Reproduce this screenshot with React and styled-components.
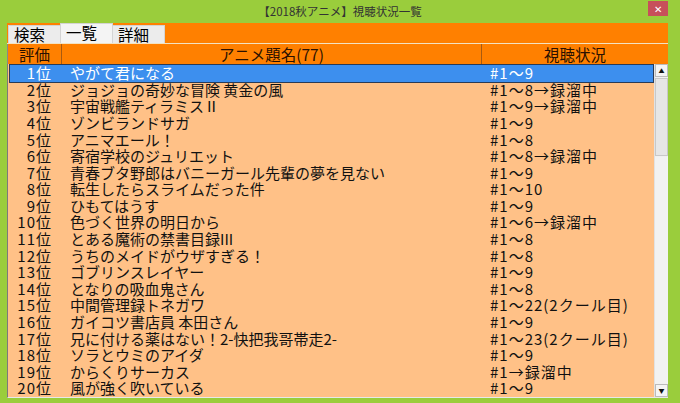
import React from 'react'
import styled, { createGlobalStyle } from 'styled-components'

const GlobalStyle = createGlobalStyle`
  html, body {
    margin: 0;
    padding: 0;
    background: #9acd3c;
  }
`

const rows = [
  ['1位', 'やがて君になる', '#1～9'],
  ['2位', 'ジョジョの奇妙な冒険 黄金の風', '#1～8→録溜中'],
  ['3位', '宇宙戦艦ティラミスⅡ', '#1～9→録溜中'],
  ['4位', 'ゾンビランドサガ', '#1～9'],
  ['5位', 'アニマエール！', '#1～8'],
  ['6位', '寄宿学校のジュリエット', '#1～8→録溜中'],
  ['7位', '青春ブタ野郎はバニーガール先輩の夢を見ない', '#1～9'],
  ['8位', '転生したらスライムだった件', '#1～10'],
  ['9位', 'ひもてはうす', '#1～9'],
  ['10位', '色づく世界の明日から', '#1～6→録溜中'],
  ['11位', 'とある魔術の禁書目録III', '#1～8'],
  ['12位', 'うちのメイドがウザすぎる！', '#1～8'],
  ['13位', 'ゴブリンスレイヤー', '#1～9'],
  ['14位', 'となりの吸血鬼さん', '#1～8'],
  ['15位', '中間管理録トネガワ', '#1～22(2クール目)'],
  ['16位', 'ガイコツ書店員 本田さん', '#1～9'],
  ['17位', '兄に付ける薬はない！2-快把我哥帯走2-', '#1～23(2クール目)'],
  ['18位', 'ソラとウミのアイダ', '#1～9'],
  ['19位', 'からくりサーカス', '#1→録溜中'],
  ['20位', '風が強く吹いている', '#1～9'],
]

const App = () => {
  return (
    <Window>
      <GlobalStyle />
      <TitleBar>
        <span>【2018秋アニメ】視聴状況一覧</span>
        <CloseButton>✕</CloseButton>
      </TitleBar>
      <Client>
        <TabStrip>
          <Tab>検索</Tab>
          <Tab active>一覧</Tab>
          <Tab>詳細</Tab>
        </TabStrip>
        <Separator />
        <Header>
          <HeaderCell>評価</HeaderCell>
          <HeaderCell>アニメ題名(77)</HeaderCell>
          <HeaderCell last>視聴状況</HeaderCell>
        </Header>
        <ListArea>
          <Rows>
            {rows.map(([rank, title, status], i) => (
              <Row key={rank} selected={i === 0}>
                <Rank>{rank}</Rank>
                <Title>{title}</Title>
                <Status>{status}</Status>
              </Row>
            ))}
          </Rows>
          <ScrollBar>
            <ScrollButton>▲</ScrollButton>
            <Thumb />
            <Track />
            <ScrollButton>▼</ScrollButton>
          </ScrollBar>
        </ListArea>
      </Client>
    </Window>
  )
}

const Window = styled.div`
  width: 680px;
  height: 403px;
  background: #9acd3c;
  display: flex;
  flex-direction: column;
  font-family: "Noto Sans CJK JP", "Noto Sans", sans-serif;
  overflow: hidden;
`

const TitleBar = styled.div`
  height: 24px;
  position: relative;
  display: flex;
  align-items: center;
  justify-content: center;
  font-size: 11.5px;
  color: #333;
  span {
    margin-top: -1px;
  }
`

const CloseButton = styled.div`
  position: absolute;
  right: 12px;
  top: 1px;
  width: 20px;
  height: 15px;
  background: #c7505a;
  color: #fff;
  font-size: 10px;
  display: flex;
  align-items: center;
  justify-content: center;
`

const Client = styled.div`
  margin: 0 12px 5px 7px;
  flex: 1;
  display: flex;
  flex-direction: column;
`

const TabStrip = styled.div`
  height: 20px;
  background: #ff8000;
  display: flex;
  align-items: flex-end;
  padding-left: 1px;
`

const Tab = styled.div`
  width: 53px;
  height: ${p => (p.active ? '20px' : '18px')};
  background: ${p => (p.active ? '#f4f4f4' : '#ececec')};
  border: 1px solid #d4d4d4;
  border-bottom: none;
  box-sizing: border-box;
  font-size: 15.5px;
  line-height: 17px;
  color: #000;
  padding-left: 5px;
  margin-right: -1px;
`

const Separator = styled.div`
  height: 1px;
  background: #f3e3c2;
`

const Header = styled.div`
  height: 20px;
  background: #ff8000;
  display: grid;
  grid-template-columns: 54px 420px 1fr;
  border-left: 1px solid #888;
`

const HeaderCell = styled.div`
  font-size: 15.5px;
  line-height: 20px;
  text-align: center;
  color: #2a1000;
  border-right: ${p => (p.last ? 'none' : '1px solid #a85a10')};
`

const ListArea = styled.div`
  flex: 1;
  display: flex;
  background: #ffc187;
  border-left: 1px solid #7a7a7a;
  border-bottom: 1px solid #e8e8e8;
  overflow: hidden;
`

const Rows = styled.div`
  flex: 1;
  display: flex;
  flex-direction: column;
  padding: 1px 1px 0 2px;
`

const Row = styled.div`
  height: 16.6px;
  flex-shrink: 0;
  display: grid;
  grid-template-columns: 42px 428px 1fr;
  align-items: center;
  font-size: 15px;
  line-height: 16.6px;
  white-space: nowrap;
  color: ${p => (p.selected ? '#fff' : '#111')};
  background: ${p => (p.selected ? '#3d8fee' : 'transparent')};
  outline: ${p => (p.selected ? '1px solid #2a3b55' : 'none')};
`

const Rank = styled.span`
  text-align: right;
  letter-spacing: 1px;
`

const Title = styled.span`
  padding-left: 18px;
`

const Status = styled.span`
  padding-left: 10px;
  letter-spacing: 1px;
`

const ScrollBar = styled.div`
  width: 13px;
  display: flex;
  flex-direction: column;
  background: #f0f0f0;
  border-left: 1px solid #e2e2e2;
`

const ScrollButton = styled.div`
  height: 13px;
  background: #f4f4f4;
  border: 1px solid #bbb;
  box-sizing: border-box;
  font-size: 6px;
  display: flex;
  align-items: center;
  justify-content: center;
  color: #111;
`

const Thumb = styled.div`
  height: 78px;
  margin: 1px 0;
  background: #e6e6e6;
  border: 1px solid #c8c8c8;
  box-sizing: border-box;
`

const Track = styled.div`
  flex: 1;
  background: #f2f2f2;
`

export default App
